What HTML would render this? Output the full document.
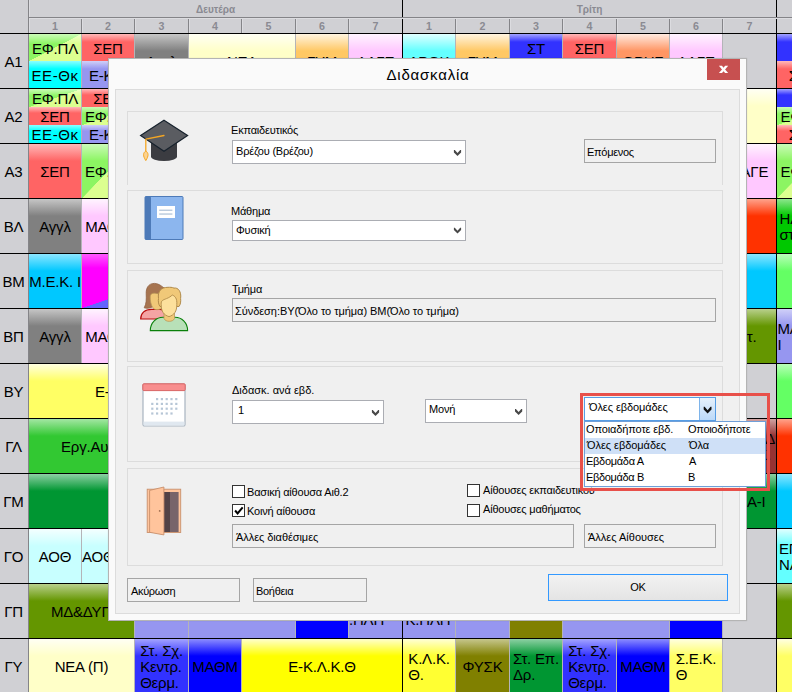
<!DOCTYPE html>
<html lang="el">
<head>
<meta charset="utf-8">
<title>Διδασκαλία</title>
<style>
*{box-sizing:border-box;margin:0;padding:0}
html,body{width:792px;height:692px;overflow:hidden;background:#d0d0d4}
body{position:relative;font-family:"Liberation Sans",sans-serif;color:#000}
#grid{position:absolute;left:0;top:0;width:792px;height:692px;overflow:hidden;background:#d0d0d4}
#grid div{position:absolute}
.c{display:flex;align-items:center;justify-content:center;font-size:15px;letter-spacing:-.2px;line-height:16px;overflow:hidden;white-space:nowrap;padding-top:1px}
.c.l{justify-content:flex-start;padding-left:2px}
.ml{display:inline-block;text-align:left}
.day{top:0;height:17px;line-height:19px;text-align:center;font-size:10px;font-weight:bold;color:#8a8a92}
.num{top:18px;height:15px;line-height:17px;text-align:center;font-size:10.67px;font-weight:bold;color:#8a8a92}
.vl{width:2px;background:linear-gradient(to right,#848488 0,#848488 1px,#dcdce0 1px)}
.hl{height:2px;background:linear-gradient(to bottom,#848488 0,#848488 1px,#dcdce0 1px)}
.bvl{top:0;width:1px;height:692px;background:#000}
.bhl{left:0;width:792px;height:1px;background:#000}
.lab{left:0;width:27px;height:54px;line-height:54px;text-align:center;font-size:15px;letter-spacing:-.2px;padding-top:1px}
/* dialog */
#dlg{position:absolute;left:108px;top:58px;width:639px;height:563px;background:#fafafa;border:1px solid #b4b4b4;box-shadow:0 0 1px rgba(0,0,0,.15)}
#dlg div,#dlg span,#dlg svg{position:absolute}
#title{left:0;top:0;width:638px;height:30px;text-align:center;font-size:15px;letter-spacing:.8px;line-height:32px}
#close{left:598px;top:0;width:33px;height:21px;background:#c75050}
#client{left:6px;top:30px;width:625px;height:525px;background:#f0f0f0;border:1px solid #dcdcdc}
.gb{border:1px solid #dcdcdc;left:11px;width:596px}
.t{font-size:11px;line-height:13px;white-space:nowrap;letter-spacing:-.2px}
.cb{background:#fff;border:1px solid #abadb3}
.fl{border:1px solid #a5a5a5;background:#f0f0f0}
.btn{border:1px solid #a5a5a5;background:#f0f0f0}
.chk{width:13px;height:13px;background:#fff;border:1px solid #333}
</style>
</head>
<body>
<div id="grid">
<div class="day" style="left:29px;width:373px">Δευτέρα</div>
<div class="num" style="left:29px;width:52px">1</div>
<div class="vl" style="left:81px;top:18px;height:15px"></div>
<div class="num" style="left:82px;width:52px">2</div>
<div class="vl" style="left:134px;top:18px;height:15px"></div>
<div class="num" style="left:135px;width:53px">3</div>
<div class="vl" style="left:188px;top:18px;height:15px"></div>
<div class="num" style="left:189px;width:52px">4</div>
<div class="vl" style="left:241px;top:18px;height:15px"></div>
<div class="num" style="left:242px;width:53px">5</div>
<div class="vl" style="left:295px;top:18px;height:15px"></div>
<div class="num" style="left:296px;width:52px">6</div>
<div class="vl" style="left:348px;top:18px;height:15px"></div>
<div class="num" style="left:349px;width:53px">7</div>
<div class="day" style="left:403px;width:373px">Τρίτη</div>
<div class="num" style="left:403px;width:52px">1</div>
<div class="vl" style="left:455px;top:18px;height:15px"></div>
<div class="num" style="left:456px;width:53px">2</div>
<div class="vl" style="left:509px;top:18px;height:15px"></div>
<div class="num" style="left:510px;width:52px">3</div>
<div class="vl" style="left:562px;top:18px;height:15px"></div>
<div class="num" style="left:563px;width:53px">4</div>
<div class="vl" style="left:616px;top:18px;height:15px"></div>
<div class="num" style="left:617px;width:52px">5</div>
<div class="vl" style="left:669px;top:18px;height:15px"></div>
<div class="num" style="left:670px;width:52px">6</div>
<div class="vl" style="left:722px;top:18px;height:15px"></div>
<div class="num" style="left:723px;width:53px">7</div>
<div class="vl" style="left:28px;top:0;height:692px"></div>
<div style="left:81px;top:34px;width:1px;height:658px;background:#b4b4b8"></div>
<div style="left:134px;top:34px;width:1px;height:658px;background:#b4b4b8"></div>
<div style="left:188px;top:34px;width:1px;height:658px;background:#b4b4b8"></div>
<div style="left:241px;top:34px;width:1px;height:658px;background:#b4b4b8"></div>
<div style="left:295px;top:34px;width:1px;height:658px;background:#b4b4b8"></div>
<div style="left:348px;top:34px;width:1px;height:658px;background:#b4b4b8"></div>
<div style="left:455px;top:34px;width:1px;height:658px;background:#b4b4b8"></div>
<div style="left:509px;top:34px;width:1px;height:658px;background:#b4b4b8"></div>
<div style="left:562px;top:34px;width:1px;height:658px;background:#b4b4b8"></div>
<div style="left:616px;top:34px;width:1px;height:658px;background:#b4b4b8"></div>
<div style="left:669px;top:34px;width:1px;height:658px;background:#b4b4b8"></div>
<div style="left:722px;top:34px;width:1px;height:658px;background:#b4b4b8"></div>
<div class="bvl" style="left:402px"></div>
<div class="bvl" style="left:776px"></div>
<div class="hl" style="left:29px;top:17px;width:763px"></div>
<div class="lab" style="top:34px">Α1</div>
<div class="lab" style="top:89px">Α2</div>
<div class="lab" style="top:144px">Α3</div>
<div class="lab" style="top:199px">ΒΛ</div>
<div class="lab" style="top:254px">ΒΜ</div>
<div class="lab" style="top:309px">ΒΠ</div>
<div class="lab" style="top:364px">ΒΥ</div>
<div class="lab" style="top:419px">ΓΛ</div>
<div class="lab" style="top:474px">ΓΜ</div>
<div class="lab" style="top:529px">ΓΟ</div>
<div class="lab" style="top:584px">ΓΠ</div>
<div class="lab" style="top:639px">ΓΥ</div>
<div class="bhl" style="top:33px"></div>
<div class="bhl" style="top:88px"></div>
<div class="bhl" style="top:143px"></div>
<div class="bhl" style="top:198px"></div>
<div class="bhl" style="top:253px"></div>
<div class="bhl" style="top:308px"></div>
<div class="bhl" style="top:363px"></div>
<div class="bhl" style="top:418px"></div>
<div class="bhl" style="top:473px"></div>
<div class="bhl" style="top:528px"></div>
<div class="bhl" style="top:583px"></div>
<div class="bhl" style="top:638px"></div>
<div class="bhl" style="top:693px"></div>
<div class="c " style="left:29px;top:34px;width:52px;height:27px;background:linear-gradient(to bottom,rgba(255,255,255,.55) 0,rgba(255,255,255,0) 10px),linear-gradient(to bottom right,#8cf562 50%,#dcff90 50.5%);padding-top:2.2px;">ΕΦ.ΠΛ</div>
<div class="c " style="left:29px;top:61px;width:52px;height:27px;background:linear-gradient(to bottom,#8cffff 0,#00ffff 8px);letter-spacing:.55px;padding-top:2.2px;">ΕΕ-Θκ</div>
<div class="c " style="left:82px;top:34px;width:52px;height:27px;background:linear-gradient(to bottom,#ffb9b9 0,#ff6464 8px);padding-top:2.2px;">ΣΕΠ</div>
<div class="c " style="left:82px;top:61px;width:52px;height:27px;background:linear-gradient(to bottom,#d0d0f8 0,#9696f0 8px);padding-top:2.2px;">Ε-Κ.Λ</div>
<div class="c " style="left:135px;top:34px;width:53px;height:54px;background:linear-gradient(to bottom,#c6c6c6 0,#808080 17px);">Αγγλ</div>
<div class="c " style="left:189px;top:34px;width:106px;height:54px;background:linear-gradient(to bottom,#fffff4 0,#ffffc8 17px);">ΝΕΑ</div>
<div class="c " style="left:296px;top:34px;width:52px;height:54px;background:linear-gradient(to bottom,#fff4e0 0,#ffc864 17px);">ΓΥΜ</div>
<div class="c " style="left:349px;top:34px;width:53px;height:54px;background:linear-gradient(to bottom,#fff4ff 0,#ffc8ff 17px);">ΛΑΓΕ</div>
<div class="c " style="left:403px;top:34px;width:52px;height:54px;background:linear-gradient(to bottom,#e0ffff 0,#64ffff 17px);">ΑΡΘΚ</div>
<div class="c " style="left:456px;top:34px;width:53px;height:54px;background:linear-gradient(to bottom,#fff4e0 0,#ffc864 17px);">ΓΥΜ</div>
<div class="c " style="left:510px;top:34px;width:52px;height:27px;background:linear-gradient(to bottom,#a3a3ff 0,#3232ff 8px);padding-top:2.2px;">ΣΤ</div>
<div class="c " style="left:510px;top:61px;width:52px;height:27px;background:linear-gradient(to bottom,#d0d0f8 0,#9696f0 8px);padding-top:2.2px;"></div>
<div class="c " style="left:563px;top:34px;width:53px;height:27px;background:linear-gradient(to bottom,#ffb9b9 0,#ff6464 8px);padding-top:2.2px;">ΣΕΠ</div>
<div class="c " style="left:563px;top:61px;width:53px;height:27px;background:linear-gradient(to bottom,#d0d0f8 0,#9696f0 8px);padding-top:2.2px;"></div>
<div class="c " style="left:617px;top:34px;width:52px;height:54px;background:linear-gradient(to bottom,#ffeae0 0,#ff9664 17px);">ΘΡΗΣ</div>
<div class="c " style="left:670px;top:34px;width:52px;height:54px;background:linear-gradient(to bottom,#fff4ff 0,#ffc8ff 17px);">ΛΑΓΕ</div>
<div class="c " style="left:777px;top:34px;width:53px;height:27px;background:linear-gradient(to bottom,#a3a3ff 0,#3232ff 8px);padding-top:2.2px;"></div>
<div class="c " style="left:777px;top:61px;width:53px;height:27px;background:linear-gradient(to bottom,#ffb9b9 0,#ff6464 8px);padding-top:2.2px;">ΣΕΠ</div>
<div class="c " style="left:29px;top:89px;width:52px;height:18px;background:linear-gradient(to bottom,rgba(255,255,255,.55) 0,rgba(255,255,255,0) 7px),linear-gradient(to bottom right,#8cf562 50%,#dcff90 50.5%);">ΕΦ.ΠΛ</div>
<div class="c " style="left:29px;top:107px;width:52px;height:18px;background:linear-gradient(to bottom,#ffb9b9 0,#ff6464 6px);">ΣΕΠ</div>
<div class="c " style="left:29px;top:125px;width:52px;height:18px;background:linear-gradient(to bottom,#8cffff 0,#00ffff 6px);letter-spacing:.55px;">ΕΕ-Θκ</div>
<div class="c " style="left:82px;top:89px;width:52px;height:18px;background:linear-gradient(to bottom,#ffb9b9 0,#ff6464 6px);">ΣΕΠ</div>
<div class="c " style="left:82px;top:107px;width:52px;height:18px;background:linear-gradient(to bottom,rgba(255,255,255,.55) 0,rgba(255,255,255,0) 7px),linear-gradient(to bottom right,#8cf562 50%,#dcff90 50.5%);">ΕΦ.ΠΛ</div>
<div class="c " style="left:82px;top:125px;width:52px;height:18px;background:linear-gradient(to bottom,#d0d0f8 0,#9696f0 6px);">Ε-Κ.Λ</div>
<div class="c " style="left:723px;top:89px;width:53px;height:54px;background:linear-gradient(to bottom,#fffff4 0,#ffffc8 17px);"></div>
<div class="c " style="left:777px;top:89px;width:53px;height:18px;background:linear-gradient(to bottom,#a3a3ff 0,#3232ff 6px);"></div>
<div class="c " style="left:777px;top:107px;width:53px;height:18px;background:linear-gradient(to bottom,rgba(255,255,255,.55) 0,rgba(255,255,255,0) 7px),linear-gradient(to bottom right,#8cf562 50%,#dcff90 50.5%);">ΕΦ.ΠΛ</div>
<div class="c " style="left:777px;top:125px;width:53px;height:18px;background:linear-gradient(to bottom,#ffb9b9 0,#ff6464 6px);">ΣΕΠ</div>
<div class="c " style="left:29px;top:144px;width:52px;height:54px;background:linear-gradient(to bottom,#ffb9b9 0,#ff6464 17px);">ΣΕΠ</div>
<div class="c " style="left:82px;top:144px;width:52px;height:54px;background:linear-gradient(to bottom,rgba(255,255,255,.55) 0,rgba(255,255,255,0) 17px),linear-gradient(to bottom right,#8cf562 50%,#dcff90 50.5%);">ΕΦ.ΠΛ</div>
<div class="c " style="left:723px;top:144px;width:53px;height:54px;background:linear-gradient(to bottom,#fff4ff 0,#ffc8ff 17px);">ΛΑΓΕ</div>
<div class="c " style="left:777px;top:144px;width:53px;height:54px;background:linear-gradient(to bottom,rgba(255,255,255,.55) 0,rgba(255,255,255,0) 17px),linear-gradient(to bottom right,#8cf562 50%,#dcff90 50.5%);">ΕΦ.ΠΛ</div>
<div class="c " style="left:29px;top:199px;width:52px;height:54px;background:linear-gradient(to bottom,#c6c6c6 0,#808080 17px);">Αγγλ</div>
<div class="c " style="left:82px;top:199px;width:52px;height:54px;background:linear-gradient(to bottom,#fff4ff 0,#ffc8ff 17px);">ΜΑΘΜ</div>
<div class="c " style="left:723px;top:199px;width:53px;height:54px;background:linear-gradient(to bottom,#ffa38c 0,#ff3200 17px);"></div>
<div class="c l" style="left:777px;top:199px;width:53px;height:54px;background:linear-gradient(to bottom,#8ce68c 0,#00c800 17px);padding-left:2.5px;"><span class="ml">ΗΛ.ΕΓ<br>στ.</span></div>
<div class="c " style="left:29px;top:254px;width:52px;height:54px;background:linear-gradient(to bottom,#8ce6ff 0,#00c8ff 17px);">Μ.Ε.Κ. Ι</div>
<div class="c " style="left:82px;top:254px;width:159px;height:54px;background:linear-gradient(to bottom,rgba(255,255,255,.35) 0,rgba(255,255,255,0) 14px),linear-gradient(to bottom right,#ff00ff 50%,#6464ff 50.3%);"></div>
<div class="c " style="left:723px;top:254px;width:53px;height:54px;background:linear-gradient(to bottom,#8ce6ff 0,#00c8ff 17px);"></div>
<div class="c " style="left:777px;top:254px;width:53px;height:54px;background:linear-gradient(to bottom,#b9ffb9 0,#64ff64 17px);"></div>
<div class="c " style="left:29px;top:309px;width:52px;height:54px;background:linear-gradient(to bottom,#c6c6c6 0,#808080 17px);">Αγγλ</div>
<div class="c " style="left:82px;top:309px;width:52px;height:54px;background:linear-gradient(to bottom,#fff4ff 0,#ffc8ff 17px);">ΜΑΘΜ</div>
<div class="c l" style="left:723px;top:309px;width:53px;height:54px;background:linear-gradient(to bottom,#b9d08c 0,#649600 17px);padding-left:23.7px;">τ.</div>
<div class="c l" style="left:777px;top:309px;width:53px;height:54px;background:linear-gradient(to bottom,#d0d0f8 0,#9696f0 17px);padding-left:.5px;"><span class="ml">ΜΑΘΜ<br>Ι</span></div>
<div class="c l" style="left:29px;top:364px;width:212px;height:54px;background:linear-gradient(to bottom,#ffffe0 0,#ffff64 17px);padding-left:66px;">Ε-Κ.Λ.Κ.Θ</div>
<div class="c " style="left:777px;top:364px;width:53px;height:54px;background:linear-gradient(to bottom,#b9ffb9 0,#64ff64 17px);"></div>
<div class="c l" style="left:29px;top:419px;width:212px;height:54px;background:linear-gradient(to bottom,#a3e6a3 0,#32c832 17px);padding-left:32px;">Εργ.Αυτομ-Ηλεκτρ</div>
<div class="c " style="left:723px;top:419px;width:53px;height:54px;background:linear-gradient(to bottom,#d0a3a3 0,#963232 17px);justify-content:flex-end;padding-right:1px;"><span class="ml" style="text-align:right">ΗΛ.Τ.Δ<br>ΕΓΚ.&nbsp;</span></div>
<div class="c " style="left:777px;top:419px;width:53px;height:54px;background:linear-gradient(to bottom,#ffa38c 0,#ff3200 17px);"></div>
<div class="c " style="left:29px;top:474px;width:212px;height:54px;background:linear-gradient(to bottom,#8cd0a3 0,#009632 17px);"></div>
<div class="c l" style="left:723px;top:474px;width:53px;height:54px;background:linear-gradient(to bottom,#8cd0a3 0,#009632 17px);padding-left:24px;">Α-Ι</div>
<div class="c " style="left:777px;top:474px;width:53px;height:54px;background:linear-gradient(to bottom,#8ce6ff 0,#00c8ff 17px);"></div>
<div class="c " style="left:29px;top:529px;width:52px;height:54px;background:linear-gradient(to bottom,#f4ffff 0,#c8ffff 17px);">ΑΟΘ</div>
<div class="c l" style="left:82px;top:529px;width:52px;height:54px;background:linear-gradient(to bottom,#f4ffff 0,#c8ffff 17px);padding-left:0;">ΑΟΘ-ΘΚ</div>
<div class="c l" style="left:777px;top:529px;width:53px;height:54px;background:linear-gradient(to bottom,#e0ffff 0,#64ffff 17px);"><span class="ml">ΕΠ.<br>ΝΑ</span></div>
<div class="c " style="left:29px;top:584px;width:105px;height:54px;background:linear-gradient(to bottom,#b9d08c 0,#649600 17px);">ΜΔ&amp;ΔΥΠ</div>
<div class="c " style="left:135px;top:584px;width:53px;height:54px;background:linear-gradient(to bottom,#d0d0f8 0,#9696f0 17px);"></div>
<div class="c " style="left:189px;top:584px;width:106px;height:54px;background:linear-gradient(to bottom,#d0d0f8 0,#9696f0 17px);"></div>
<div class="c " style="left:296px;top:584px;width:52px;height:54px;background:linear-gradient(to bottom,#8c8cff 0,#0000ff 17px);"></div>
<div class="c l" style="left:349px;top:584px;width:53px;height:54px;background:linear-gradient(to bottom,#d0d0f8 0,#9696f0 17px);padding-left:0;"><span class="ml">ΕΦΑΡΜΟΓ<br>.ΠΛΗ</span></div>
<div class="c l" style="left:403px;top:584px;width:52px;height:54px;background:linear-gradient(to bottom,#d0d0f8 0,#9696f0 17px);padding-left:2.5px;"><span class="ml">ΔΙΚΤ.<br>Κ.ΠΛΗ</span></div>
<div class="c " style="left:456px;top:584px;width:53px;height:54px;background:linear-gradient(to bottom,#d0d0f8 0,#9696f0 17px);"></div>
<div class="c " style="left:510px;top:584px;width:52px;height:54px;background:linear-gradient(to bottom,#c6c68c 0,#808000 17px);"></div>
<div class="c " style="left:563px;top:584px;width:106px;height:54px;background:linear-gradient(to bottom,#d0d0f8 0,#9696f0 17px);"></div>
<div class="c " style="left:670px;top:584px;width:52px;height:54px;background:linear-gradient(to bottom,#8c8cff 0,#0000ff 17px);"></div>
<div class="c " style="left:777px;top:584px;width:53px;height:54px;background:linear-gradient(to bottom,#b9d08c 0,#649600 17px);"></div>
<div class="c " style="left:29px;top:639px;width:105px;height:54px;background:linear-gradient(to bottom,#fffff4 0,#ffffc8 17px);">ΝΕΑ (Π)</div>
<div class="c " style="left:135px;top:639px;width:53px;height:54px;background:linear-gradient(to bottom,#a3a3ff 0,#3232ff 17px);"><span class="ml">Στ. Σχ.<br>Κεντρ.<br>Θερμ.</span></div>
<div class="c " style="left:189px;top:639px;width:52px;height:54px;background:linear-gradient(to bottom,#8c8cff 0,#0000ff 17px);">ΜΑΘΜ</div>
<div class="c " style="left:242px;top:639px;width:160px;height:54px;background:linear-gradient(to bottom,#ffffcc 0,#ffff00 17px);">Ε-Κ.Λ.Κ.Θ</div>
<div class="c " style="left:403px;top:639px;width:52px;height:54px;background:linear-gradient(to bottom,#ffffd6 0,#ffff32 17px);"><span class="ml">Κ.Λ.Κ.<br>Θ.</span></div>
<div class="c " style="left:456px;top:639px;width:53px;height:54px;background:linear-gradient(to bottom,#c6c68c 0,#808000 17px);">ΦΥΣΚ</div>
<div class="c " style="left:510px;top:639px;width:52px;height:54px;background:linear-gradient(to bottom,#8cd0a3 0,#009632 17px);"><span class="ml">Στ. Επ.<br>Δρ.</span></div>
<div class="c " style="left:563px;top:639px;width:53px;height:54px;background:linear-gradient(to bottom,#a3a3ff 0,#3232ff 17px);"><span class="ml">Στ. Σχ.<br>Κεντρ.<br>Θερμ.</span></div>
<div class="c " style="left:617px;top:639px;width:52px;height:54px;background:linear-gradient(to bottom,#8c8cff 0,#0000ff 17px);">ΜΑΘΜ</div>
<div class="c " style="left:670px;top:639px;width:52px;height:54px;background:linear-gradient(to bottom,#ffffe0 0,#ffff64 17px);"><span class="ml">Σ.Ε.Κ.<br>Θ</span></div>
<div class="c " style="left:777px;top:639px;width:53px;height:54px;background:linear-gradient(to bottom,#ffffe0 0,#ffff64 17px);"></div>
</div>
<div id="dlg">
<div id="title">Διδασκαλία</div>
<div id="close"><svg width="33" height="21" viewBox="0 0 33 21" style="left:0;top:0"><path d="M11.9 6.8 L15 6.8 L16.55 8.7 L18.1 6.8 L21.2 6.8 L18.1 10.45 L21.2 14.1 L18.1 14.1 L16.55 12.2 L15 14.1 L11.9 14.1 L15 10.45 Z" fill="#fff"/></svg></div>
<div id="client">
<!-- group boxes -->
<div class="gb" style="top:21px;height:74px;border-bottom:none"></div>
<div class="gb" style="top:100px;height:74px"></div>
<div class="gb" style="top:180px;height:92px"></div>
<div class="gb" style="top:276px;height:96px"></div>
<div class="gb" style="top:378px;height:98px"></div>

<!-- G1 -->
<svg id="ic-cap" width="52" height="46" viewBox="0 0 52 46" style="left:22px;top:27px">
  <path d="M13 22 L13 39.5 A13 4.6 0 0 0 39 39.5 L39 22 Z" fill="#3b3c41"/>
  <path d="M26 3.2 L49.6 18.5 L26 34.2 L2.6 18.5 Z" fill="#5a5c61" stroke="#17222d" stroke-width="1.2" stroke-linejoin="miter"/>
  <path d="M26 18.5 L7.8 22.2 L7.8 35" fill="none" stroke="#f5a623" stroke-width="1.3" stroke-linecap="round" stroke-linejoin="round"/>
  <path d="M7.8 34 C5 36 4.6 38.5 7.8 43.6 C11 38.5 10.6 36 7.8 34 Z" fill="#fcd390" stroke="#f5a623" stroke-width="1"/>
</svg>
<div class="t" style="left:115px;top:34px;letter-spacing:-.2px">Εκπαιδευτικός</div>
<div class="cb" style="left:116px;top:50px;width:234px;height:24px"></div>
<div class="t" style="left:120px;top:55px;letter-spacing:-.2px">Βρέζου (Βρέζου)</div>
<div class="btn" style="left:468px;top:49px;width:132px;height:24px"></div>
<div class="t" style="left:471px;top:56px;letter-spacing:-.3px">Επόμενος</div>

<!-- G2 -->
<svg id="ic-book" width="42" height="46" viewBox="0 0 42 46" style="left:27px;top:105px">
  <rect x="2" y="1.5" width="38" height="43" rx="1" fill="#8cb6ee" stroke="#4d7ab8" stroke-width="1"/>
  <rect x="2" y="1.5" width="6" height="43" rx="1.2" fill="#4d7ab8"/>
  <rect x="14" y="11" width="18" height="12" fill="#fff"/>
  <rect x="16.2" y="14.6" width="13.2" height="1.3" fill="#b4c6da"/>
  <rect x="16.2" y="18.4" width="13.2" height="1.3" fill="#b4c6da"/>
</svg>
<div class="t" style="left:115px;top:115px">Μάθημα</div>
<div class="cb" style="left:116px;top:130px;width:234px;height:21px"></div>
<div class="t" style="left:120px;top:134px">Φυσική</div>

<!-- G3 -->
<svg id="ic-ppl" width="52" height="52" viewBox="0 0 52 52" style="left:22px;top:190px">
  <!-- back person (woman) -->
  <path d="M2.7 39 C2.7 33 7 29.3 13.5 29.3 L22 29.3 C26 29.3 28 31 28 39 Z" fill="#f4a4a4" stroke="#b80c0c" stroke-width="1.2"/>
  <path d="M16.5 2.8 C10 2.8 8 8 8.2 13 C8.4 19 8.5 23 6.2 27.2 C10 28.5 14 27 16 25 L27 25 L27 8 C24 6 21 2.8 16.5 2.8 Z" fill="#a67450" stroke="#8f6040" stroke-width=".8" transform="translate(0 .6)"/>
  <path d="M12.2 17 C12.2 13.5 15 12.8 18 13.4 L26 15 L26 26 C24 29 18 31.5 15 28 C12.8 25 12.2 20 12.2 17 Z" fill="#f0c878" stroke="#b89858" stroke-width=".7"/>
  <!-- front person -->
  <path d="M12.3 50.6 C12.3 42.5 18.5 37.3 25 37.3 L37 37.3 C43.5 37.3 49.6 42.5 49.6 50.6 Z" fill="#b8e0b8" stroke="#0a800a" stroke-width="1.1"/>
  <path d="M26 33 L26 38.5 C27.5 42.3 35 42.3 36.5 38.5 L36.5 33 Z" fill="#f0c878" stroke="#b89858" stroke-width=".8"/>
  <path d="M30 6.8 C23 6.8 19.5 11 20.5 18 C20 21 20.6 24 22 26 L41 26 C42.5 24 43 21 42.6 18 C43.6 11 40 6.8 36 7.6 C34 6.6 32 6.8 30 6.8 Z" fill="#f0c878" stroke="#b08a4a" stroke-width="1" transform="translate(0 .5)"/>
  <path d="M23.2 24 C22.8 20 25 19.6 28.5 18.2 C31 17.2 33 16 34.2 14.6 C37 15.6 39.2 18 38.8 24 C39 31 36 34.8 31 36.2 C26 34.8 23 31 23.2 24 Z" fill="#fde09c" stroke="#b08a4a" stroke-width=".9" transform="translate(0 .4)"/>
</svg>
<div class="t" style="left:116px;top:193px">Τμήμα</div>
<div class="fl" style="left:116px;top:208px;width:484px;height:24px"></div>
<div class="t" style="left:119px;top:215px;letter-spacing:-.05px">Σύνδεση:ΒΥ(Όλο το τμήμα) ΒΜ(Όλο το τμήμα)</div>

<!-- G4 -->
<svg id="ic-cal" width="46" height="46" viewBox="0 0 46 46" style="left:25px;top:292px">
  <rect x="2" y="2" width="42" height="42" rx="1.6" fill="#fff" stroke="#a8b4c0" stroke-width="1.2"/>
  <rect x="2.6" y="39.6" width="40.8" height="3.8" fill="#e0e8f0"/>
  <rect x="1.8" y="1.8" width="42.4" height="6.8" rx="1" fill="#f88e8e" stroke="#d96464" stroke-width="1"/>
  <g fill="#b6c6d6">
   <rect x="15" y="16" width="2.2" height="2.2"/><rect x="19.8" y="16" width="2.2" height="2.2"/><rect x="24.6" y="16" width="2.2" height="2.2"/><rect x="29.4" y="16" width="2.2" height="2.2"/><rect x="34.2" y="16" width="2.2" height="2.2"/>
   <rect x="10.2" y="20.8" width="2.2" height="2.2"/><rect x="15" y="20.8" width="2.2" height="2.2"/><rect x="19.8" y="20.8" width="2.2" height="2.2"/><rect x="24.6" y="20.8" width="2.2" height="2.2"/><rect x="29.4" y="20.8" width="2.2" height="2.2"/><rect x="34.2" y="20.8" width="2.2" height="2.2"/>
   <rect x="10.2" y="25.6" width="2.2" height="2.2"/><rect x="15" y="25.6" width="2.2" height="2.2"/><rect x="19.8" y="25.6" width="2.2" height="2.2"/><rect x="24.6" y="25.6" width="2.2" height="2.2"/><rect x="29.4" y="25.6" width="2.2" height="2.2"/><rect x="34.2" y="25.6" width="2.2" height="2.2"/>
   <rect x="10.2" y="30.4" width="2.2" height="2.2"/><rect x="15" y="30.4" width="2.2" height="2.2"/><rect x="19.8" y="30.4" width="2.2" height="2.2"/><rect x="24.6" y="30.4" width="2.2" height="2.2"/><rect x="29.4" y="30.4" width="2.2" height="2.2"/>
  </g>
</svg>
<div class="t" style="left:116px;top:294px;letter-spacing:0">Διδασκ. ανά εβδ.</div>
<div class="cb" style="left:116px;top:310px;width:152px;height:24px"></div>
<div class="t" style="left:122px;top:314px">1</div>
<div class="cb" style="left:309px;top:309px;width:102px;height:24px"></div>
<div class="t" style="left:313px;top:313px">Μονή</div>

<svg class="chev" width="10" height="9" viewBox="0 0 10 9" style="left:337px;top:59px"><polygon points="0.90,1.10 1.80,1.10 4.50,4.10 7.20,1.10 8.10,1.10 8.10,3.50 4.50,7.00 0.90,3.50" fill="#484848"/></svg>
<svg class="chev" width="10" height="9" viewBox="0 0 10 9" style="left:337px;top:137px"><polygon points="0.90,0.70 1.80,0.70 4.50,3.70 7.20,0.70 8.10,0.70 8.10,3.10 4.50,6.60 0.90,3.10" fill="#484848"/></svg>
<svg class="chev" width="10" height="9" viewBox="0 0 10 9" style="left:255px;top:319px"><polygon points="0.90,1.10 1.80,1.10 4.50,4.10 7.20,1.10 8.10,1.10 8.10,3.50 4.50,7.00 0.90,3.50" fill="#484848"/></svg>
<svg class="chev" width="10" height="9" viewBox="0 0 10 9" style="left:399px;top:318px"><polygon points="0.00,1.10 0.90,1.10 3.60,4.10 6.30,1.10 7.20,1.10 7.20,3.50 3.60,7.00 0.00,3.50" fill="#484848"/></svg>
<!-- G5 -->
<svg id="ic-door" width="40" height="52" viewBox="0 0 40 52" style="left:28px;top:395px">
  <rect x="3.2" y="4.2" width="33.5" height="43.3" fill="#ffc49c" stroke="#c8906c" stroke-width=".9"/>
  <rect x="20" y="7" width="6" height="40" fill="#524246"/>
  <rect x="26" y="7" width="8.6" height="40" fill="#78646a"/>
  <path d="M5.6 5.4 L19.9 2 L19.9 49.9 L5.6 47.3 Z" fill="#ffc49c" stroke="#c8906c" stroke-width=".9"/>
  <circle cx="15.7" cy="25.9" r=".9" fill="#a07050"/>
</svg>
<div class="chk" style="left:116px;top:395px"></div>
<div class="t" style="left:131px;top:396px">Βασική αίθουσα Αιθ.2</div>
<div class="chk" style="left:116px;top:414px"><svg width="11" height="11" viewBox="0 0 11 11" style="left:0;top:0"><path d="M2.1 5.5 L4.6 8.4 L9.7 2.3" fill="none" stroke="#000" stroke-width="2"/></svg></div>
<div class="t" style="left:131px;top:415px">Κοινή αίθουσα</div>
<div class="chk" style="left:351px;top:394px"></div>
<div class="t" style="left:367px;top:394px">Αίθουσες εκπαιδευτικού</div>
<div class="chk" style="left:351px;top:414px"></div>
<div class="t" style="left:367px;top:413px">Αίθουσες μαθήματος</div>
<div class="fl" style="left:116px;top:434px;width:342px;height:24px"></div>
<div class="t" style="left:120px;top:441px;letter-spacing:-.07px">Άλλες διαθέσιμες</div>
<div class="btn" style="left:468px;top:434px;width:132px;height:24px"></div>
<div class="t" style="left:472px;top:441px;letter-spacing:0">Άλλες Αίθουσες</div>

<!-- bottom buttons -->
<div class="btn" style="left:11px;top:488px;width:113px;height:24px"></div>
<div class="t" style="left:15px;top:495px;letter-spacing:-.33px">Ακύρωση</div>
<div class="btn" style="left:137px;top:488px;width:114px;height:24px"></div>
<div class="t" style="left:140px;top:495px;letter-spacing:-.3px">Βοήθεια</div>
<div class="btn" style="left:432px;top:484px;width:180px;height:27px;border-color:#3399ff;background:linear-gradient(to bottom,#f2f2f2,#e4e4e4)"></div>
<div class="t" style="left:432px;top:491px;width:180px;text-align:center">OK</div>

<!-- active combo + dropdown + red highlight -->
<div class="cb" style="left:468px;top:307px;width:132px;height:24px;border-color:#569de5"></div>
<div style="left:583px;top:308px;width:16px;height:22px;background:linear-gradient(to bottom,#e6f1fc,#bcd9f8);border-left:1px solid #7eb4ea"></div>
<svg class="chev" width="10" height="9" viewBox="0 0 10 9" style="left:587px;top:316px"><polygon points="0.70,0.73 1.67,0.73 4.60,4.18 7.52,0.73 8.50,0.73 8.50,3.49 4.60,7.51 0.70,3.49" fill="#111"/></svg>
<div class="t" style="left:473px;top:311px;letter-spacing:-.08px">Όλες εβδομάδες</div>
<div id="dd" style="left:468px;top:331px;width:182px;height:66px;background:#fff;border:1px solid #6f9fd8">
  <div style="left:0;top:16px;width:180px;height:16px;background:#cfe0f7"></div>
  <div class="t" style="left:1px;top:1px;letter-spacing:-.13px">Οποιαδήποτε εβδ.</div><div class="t" style="left:103px;top:1px;letter-spacing:-.3px">Οποιοδήποτε</div>
  <div class="t" style="left:2px;top:17px;letter-spacing:-.05px">Όλες εβδομάδες</div><div class="t" style="left:104px;top:17px;letter-spacing:-.1px">Όλα</div>
  <div class="t" style="left:1px;top:33px;letter-spacing:-.3px">Εβδομάδα Α</div><div class="t" style="left:104px;top:33px">Α</div>
  <div class="t" style="left:1px;top:49px;letter-spacing:-.35px">Εβδομάδα Β</div><div class="t" style="left:103px;top:49px">Β</div>
</div>
<div id="redbox" style="left:464px;top:303px;width:190px;height:98px;border:3px solid #e8504a"></div>

</div>
</div>
</body>
</html>
